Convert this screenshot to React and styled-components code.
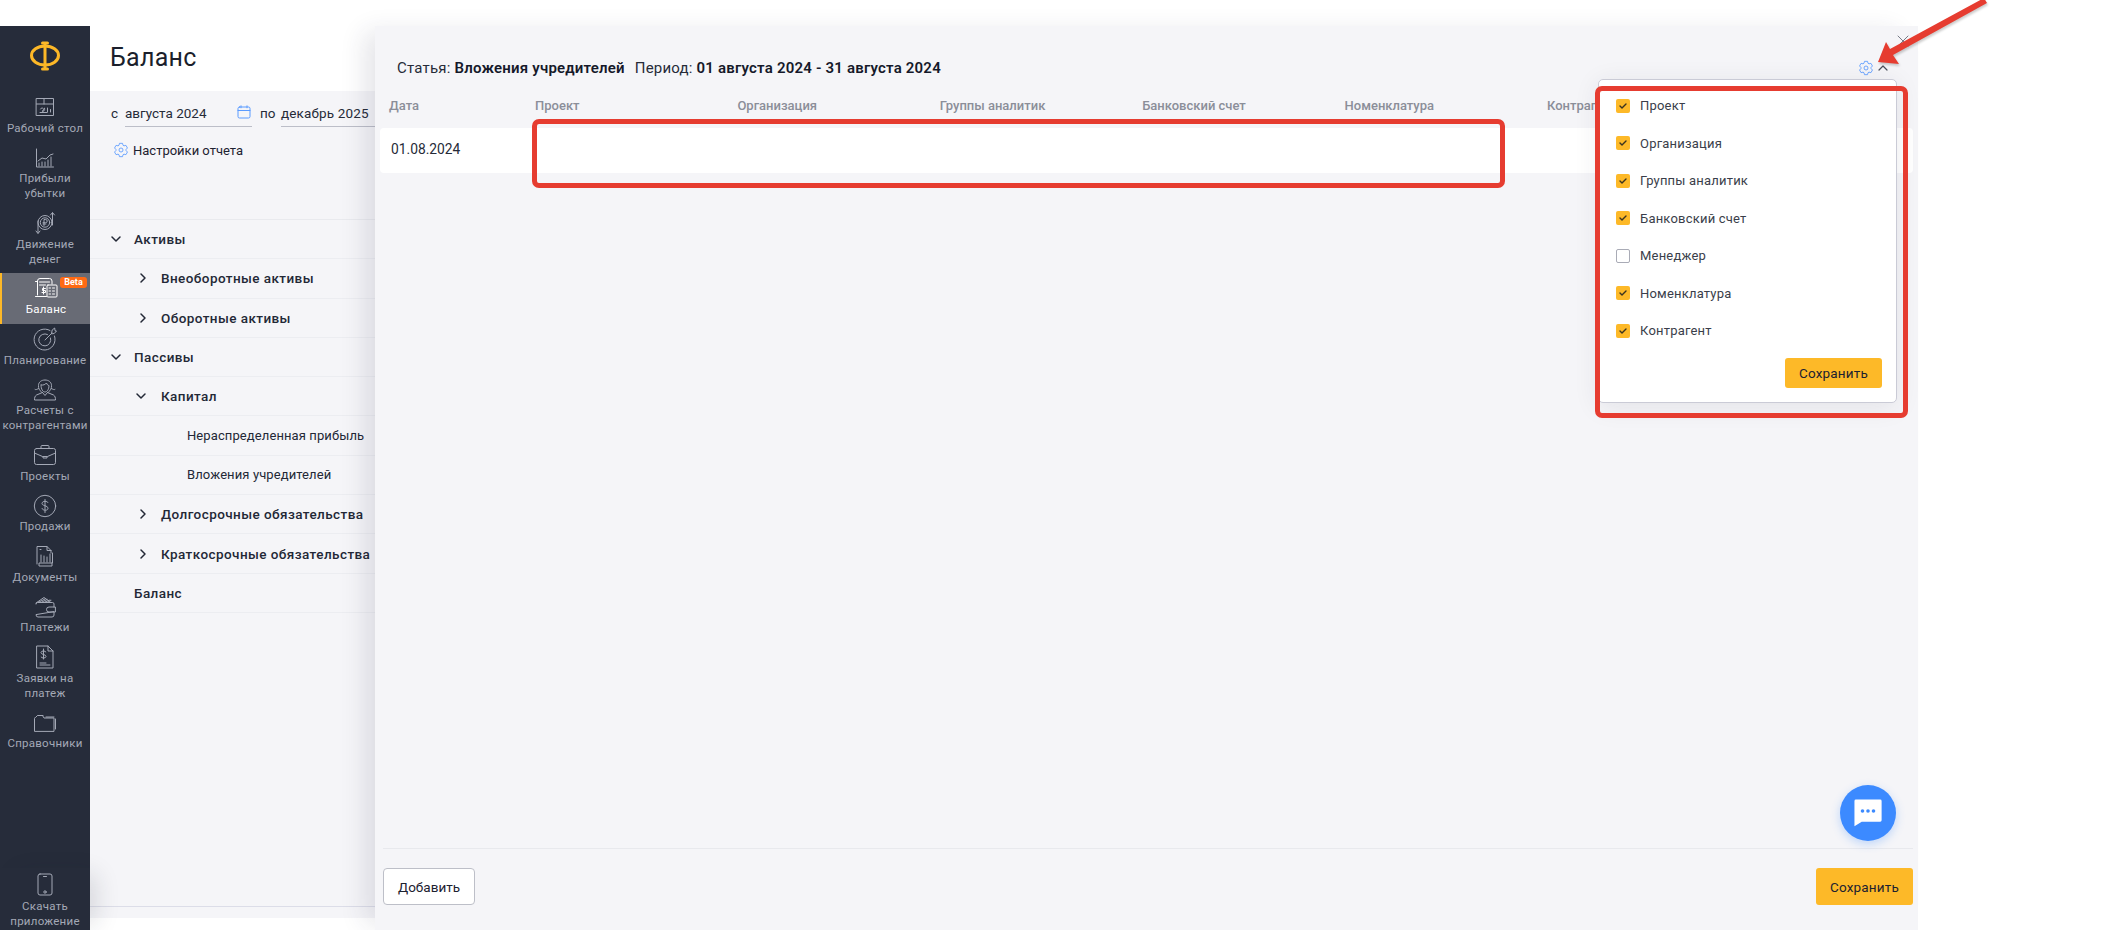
import React from "react";
import styled, { createGlobalStyle } from "styled-components";

const Global = createGlobalStyle`
  html, body { margin: 0; padding: 0; background: #fff; }
  * { box-sizing: border-box; }
  body { font-family: "Roboto", "Noto Sans", "Liberation Sans", sans-serif; color: #1c2130; }
`;

const Page = styled.div`
  position: relative; width: 2105px; height: 930px; padding-top: 26px;
  display: flex; overflow: hidden; background: #fff;
`;
const Sidebar = styled.nav`
  width: 90px; flex: none; background: #262c3a; display: flex; flex-direction: column; position: relative; z-index: 1;
`;
const LogoBox = styled.div`
  height: 66px; display: flex; align-items: center; justify-content: center; padding-bottom: 6px;
`;
const NavItem = styled.div`
  position: relative; height: ${p => (p.$double ? 65.45 : 50.6)}px; padding-top: 3.5px;
  display: flex; flex-direction: column; align-items: center;
  color: ${p => (p.$active ? "#fff" : "#a4a9b6")};
  background: ${p => (p.$active ? "#686b75" : "transparent")};
  border-left: ${p => (p.$active ? "2px solid #fdb827" : "0")};
`;
const NavIcon = styled.div`
  height: 23px; display: flex; align-items: center; justify-content: center;
`;
const NavLabel = styled.div`
  margin-top: 2px; font-size: 11.5px; line-height: 15px; text-align: center; letter-spacing: .25px; white-space: pre-line;
`;
const Beta = styled.span`
  position: absolute; top: 4px; right: 3px; width: 27px; height: 11px; border-radius: 3px;
  background: #ff6a13; color: #fff; font-size: 9px; font-weight: 700; line-height: 11px; text-align: center;
`;
const SideFooter = styled.div`
  margin-top: auto; height: 62px; padding-top: 5.5px; display: flex; flex-direction: column; align-items: center;
  color: #a4a9b6; position: relative; box-shadow: 12px 0 24px -6px rgba(30,35,50,.14);
`;
const Main = styled.main`
  width: 300px; flex: none; display: flex; flex-direction: column;
`;
const Head = styled.header`
  height: 65px; padding-left: 20px; display: flex; align-items: center; flex: none;
`;
const Title = styled.h1`
  margin: 0; font-size: 25px; font-weight: 400; color: #1b1f2c; letter-spacing: .3px; position: relative; top: -1px;
`;
const Content = styled.section`
  flex: 1; margin-bottom: 12px; background: #f5f5f8; display: flex; flex-direction: column;
`;
const Filters = styled.div`
  height: 128px; flex: none; padding: 10px 0 0 20px;
`;
const DateRow = styled.div`
  display: flex; align-items: flex-start; font-size: 13.5px; color: #262b38; height: 27px; line-height: 24px;
`;
const DateLabel = styled.span`
  width: ${p => p.$w}px; flex: none; padding-left: 1px;
`;
const DateInput = styled.div`
  width: ${p => p.$w}px; flex: none; height: 26px; border-bottom: 1px solid #bcbec8; position: relative; white-space: nowrap;
  margin-right: ${p => p.$mr ?? 0}px; letter-spacing: ${p => p.$ls ?? 0}px;
`;
const CalendarSlot = styled.span`
  position: absolute; right: 1px; top: 4px; color: #5b9bff; display: flex;
`;
const SettingsLink = styled.div`
  display: flex; align-items: center; gap: 4px; margin: 12px 0 0 3px; font-size: 13px; color: #1d2230; height: 20px;
`;
const Tree = styled.div`
  border-top: 1.5px solid #e9eaee; flex: none;
`;
const TreeRow = styled.div`
  height: 39.3px; border-bottom: 1.5px solid #ecedf1; display: flex; align-items: center;
  padding-left: ${p => p.$indent}px; white-space: nowrap;
  font-size: ${p => (p.$plain ? 13 : 13.5)}px; letter-spacing: ${p => (p.$plain ? ".1px" : ".42px")};
  font-weight: ${p => (p.$plain ? 400 : 500)}; color: #232836;
`;
const Chevron = styled.span`
  width: ${p => p.$w}px; flex: none; display: flex; color: #232836;
`;
const Spacer = styled.div` flex: 1; `;
const ContentEnd = styled.div`
  height: 12px; border-top: 1px solid #dcdde8; flex: none;
`;
const Drawer = styled.aside`
  position: absolute; left: 375px; top: 26px; width: 1543px; height: 904px; background: #f5f5f8;
  box-shadow: -16px 0 24px -6px rgba(40,45,70,.12); display: flex; flex-direction: column; padding: 0 5px 0 5px; z-index: 2;
`;
const DrawerHead = styled.div`
  height: 68px; padding: 33px 0 0 17px; font-size: 15px; color: #262b38; display: flex; gap: 10px; flex: none; letter-spacing: .2px; line-height: 18px;
  b { font-weight: 600; color: #15192a; }
`;
const ColHeads = styled.div`
  display: grid; grid-template-columns: 146px repeat(6, 202.4px); padding: 1px 0 0 9px; height: 34px; align-items: start; flex: none;
  font-size: 13px; font-weight: 500; color: #8b8e99; overflow: hidden; white-space: nowrap; line-height: 22px;
`;
const DataRow = styled.div`
  height: 45px; background: #fff; border-radius: 4px; display: flex; align-items: center; padding: 0 0 3px 11px; font-size: 13.8px; color: #262b38; flex: none;
`;
const DrawerFill = styled.div` flex: 1; `;
const DrawerFoot = styled.footer`
  height: 82px; flex: none; border-top: 1.5px solid #e8e9ed; margin: 0 0 0 3px; padding-top: 19px;
  display: flex; justify-content: space-between; align-items: flex-start;
`;
const GhostButton = styled.button`
  width: 92px; height: 37px; background: #fff; border: 1px solid #bdbfc8; border-radius: 4px;
  font: 400 13.5px "Roboto", sans-serif; color: #1c2130;
`;
const PrimaryButton = styled.button`
  width: ${p => p.$w}px; height: ${p => p.$h}px; background: #fdb928; border: 0; border-radius: 3px;
  font: 400 13.5px "Roboto", sans-serif; color: #1c2130; letter-spacing: .2px;
`;
const CloseBtn = styled.span`
  position: absolute; right: 9px; top: 9px; color: #777b87; display: flex;
`;
const HeadIcons = styled.div`
  position: absolute; right: 29px; top: 34px; display: flex; align-items: center; gap: 3px;
`;
const Dropdown = styled.div`
  position: absolute; left: 1223px; top: 53px; width: 299px; height: 324px; background: #fff;
  border: 1px solid #cacbd6; border-radius: 5px; box-shadow: 0 4px 26px rgba(40,45,70,.09); padding: 7px 0 0 17px;
`;
const CheckRow = styled.label`
  height: 37.5px; display: flex; align-items: center; gap: 10px; font-size: 13px; color: #3a3e4a; letter-spacing: .2px;
`;
const Box = styled.span`
  width: 14px; height: 14px; border-radius: 2px; display: flex; align-items: center; justify-content: center;
  background: ${p => (p.$on ? "#fdb928" : "#fff")}; border: ${p => (p.$on ? "0" : "1.5px solid #a9abb6")};
`;
const MenuFoot = styled.div`
  position: absolute; right: 14px; bottom: 14px;
`;
const ChatBubble = styled.div`
  position: absolute; left: 1465px; top: 759px; width: 56px; height: 56px; border-radius: 50%; background: #3c8aff;
  display: flex; align-items: center; justify-content: center; box-shadow: 0 3px 10px rgba(60,138,255,.3);
`;
const RedFrame = styled.div`
  position: absolute; left: ${p => p.$l}px; top: ${p => p.$t}px; width: ${p => p.$w}px; height: ${p => p.$h}px;
  border: 5px solid #e63c30; border-radius: 7px; z-index: 3; pointer-events: none;
`;
const ArrowSvg = styled.svg`
  position: absolute; left: 1860px; top: 0; z-index: 4; filter: drop-shadow(1px 2px 1px rgba(0,0,0,.2));
`;

const I = ({ children, w = 22, h = 22, vb, sw = 1 }) => (
  <svg width={w} height={h} viewBox={vb || `0 0 ${w} ${h}`} fill="none" stroke="currentColor" strokeWidth={sw} strokeLinecap="round" strokeLinejoin="round">{children}</svg>
);

const icons = {
  desk: <I w={20} h={20}><rect x="1.5" y="1.5" width="17" height="17" /><path d="M1.5 7h17M9 1.5V7M5.5 12a1.6 1.6 0 1 1 1.5 2.2c2 .6 3-1 2.6-3M5 15.5h7M12.5 11v4M15.5 12.5V15" /></I>,
  chart: <I w={20} h={20}><path d="M1.5 1v18h17M3 13l4-3 4 1 4-4 3-1" /><path d="M4 18v-3M7 18v-4M10 18v-4M13 18v-6M16 18V9" /></I>,
  money: <I w={24} h={24}><circle cx="12" cy="11.5" r="7" /><circle cx="12" cy="11.5" r="4.7" /><path d="M11 14.5v-6h1.6a1.6 1.6 0 0 1 0 3.2H10M10 13h3M5 10v12M3 20l2 2.5L7 20M19.5 14V2M17.5 4l2-2.5 2 2.5" /></I>,
  balance: <I w={24} h={22}><path d="M3.5 18V4a2.5 2.5 0 0 1 2.5-2.5h9.5A2.5 2.5 0 0 1 18 4v3M1.5 4.5h2M1.5 19.5h11M5.5 5h10M5.5 8h6" /><rect x="13" y="8" width="10" height="12" rx="1" /><path d="M15 11h1.5M18.5 11h2M15 14h1.5M18.5 14h2M15 17h1.5M18.5 17h2M9.5 10v7M11.5 11.5H8.5v2h3v2H8" /></I>,
  plan: <I w={24} h={24}><path d="M17 3.5A10.5 10.5 0 1 0 21.5 9" /><path d="M14.5 7.5a6 6 0 1 0 3 3.5" /><path d="M12 13l7-7M18.500 6.500l.7-3.500 2.500-2 .3 2.700 1.500.3-2 2.200z" /></I>,
  people: <I w={24} h={22}><path d="M8.500 13c-2.500-2-3-3.500-3-6.500C5.500 3 8.500 1 12 1s6.500 2 6.500 5.500c0 3-.5 4.500-3 6.500" /><path d="M8.500 6c1.500.5 4-.5 5-2 .5 1.500 1.500 2.500 2.500 2.500 0 4-2 6.500-4 6.500s-4-2.500-4-7z" /><path d="M9.500 13.500l-6 2.500C2 17 1.500 18.500 1.500 21h21c0-2.500-.5-4-2-5l-6-2.500M9.500 13.500L12 16.500l2.500-3M5.500 9.500c-1.500 1-3 1.500-3.500 1M18.500 9.500c1.500 1 3 1.500 3.500 1" /></I>,
  case: <I w={24} h={22}><rect x="1.500" y="4.500" width="21" height="16" rx="2" /><path d="M8 4.500V2.500a1 1 0 0 1 1-1h6a1 1 0 0 1 1 1v2M1.500 9l8 3.500h5l8-3.500M10 12.500v1.500h4v-1.500" /></I>,
  dollar: <I w={24} h={24}><circle cx="12" cy="12" r="10.700" /><path d="M15 8.500c-.5-1.500-5.500-2-6 .8-.4 2.700 6 2 6 5 0 2.700-5.500 2.500-6 .2M12 5.500v13" /></I>,
  docs: <I w={22} h={22}><path d="M3 19V1.500h10l4 4V8M13 1.500v4h4M6 4.500h1M7 10v7M10 11v6M13 12v5M16 9v8M18.500 8v10H5v3h13v-3" /></I>,
  wallet: <I w={22} h={22}><path d="M2 7l8-5.500 5 3.500M2 8a1.500 1.500 0 0 1 1.500-1.500h15A1.500 1.500 0 0 1 20 8v3M20 16v3a2 2 0 0 1-2 2H4a2 2 0 0 1-2-2zM21 11h-6a2.500 2.500 0 0 0 0 5h6zM5 6l6-3M8 6l5-2.500M11 6l5-2M14 6l3-1.500" /></I>,
  invoice: <I w={20} h={24}><path d="M2 1h11l5 5v17H2zM13 1v5h5M5 18h6M5 20h10" /><path d="M11 7c-.5-1.500-5-1.500-5 .5 0 2.500 5 1.500 5 4 0 2-4.500 2-5 .5M8.500 4v10" /></I>,
  folder: <I w={24} h={18}><path d="M1.500 17V4.500a1 1 0 0 1 1-1l2-2h5L11 4h10v13zM5 1.500h5M13 3h8M22.500 5v10" /></I>,
  phone: <I w={18} h={24}><rect x="2" y="1" width="14" height="21" rx="2" /><path d="M7.500 3.500h3" /><circle cx="9" cy="19" r="1.200" /></I>,
};

const Gear = ({ size = 16 }) => (
  <svg width={size} height={size} viewBox="0 0 24 24" fill="none" stroke="#5b9bff" strokeWidth="1.300" strokeLinejoin="round">
    <path d="M9.700 2h4.600l.7 2.900 1.500.9 2.900-.8 2.300 4-2.100 2.100v1.800l2.100 2.100-2.300 4-2.900-.8-1.500.9-.7 2.900H9.700L9 19.100l-1.500-.9-2.900.8-2.300-4 2.100-2.100v-1.800L2.300 9l2.300-4 2.900.8L9 4.900z" />
    <circle cx="12" cy="12" r="3" />
  </svg>
);
const Down = () => <I w={12} h={10} sw={1.500}><path d="M2 3l4 4 4-4" /></I>;
const Right = () => <I w={10} h={12} sw={1.500}><path d="M3 2l4 4-4 4" /></I>;
const Check = () => <I w={10} h={10} sw={1.400}><path d="M2 5l2 2 4-4" stroke="#3a3320" /></I>;

const nav = [
  { label: "Рабочий стол", icon: "desk" },
  { label: "Прибыли\nубытки", icon: "chart", double: true },
  { label: "Движение\nденег", icon: "money", double: true },
  { label: "Баланс", icon: "balance", active: true, beta: true },
  { label: "Планирование", icon: "plan" },
  { label: "Расчеты с\nконтрагентами", icon: "people", double: true },
  { label: "Проекты", icon: "case" },
  { label: "Продажи", icon: "dollar" },
  { label: "Документы", icon: "docs" },
  { label: "Платежи", icon: "wallet" },
  { label: "Заявки на\nплатеж", icon: "invoice", double: true },
  { label: "Справочники", icon: "folder" },
];

const tree = [
  { t: "Активы", i: 20, c: "down", w: 24 },
  { t: "Внеоборотные активы", i: 48, c: "right", w: 23 },
  { t: "Оборотные активы", i: 48, c: "right", w: 23 },
  { t: "Пассивы", i: 20, c: "down", w: 24 },
  { t: "Капитал", i: 45, c: "down", w: 26 },
  { t: "Нераспределенная прибыль", i: 97, plain: true },
  { t: "Вложения учредителей", i: 97, plain: true },
  { t: "Долгосрочные обязательства", i: 48, c: "right", w: 23 },
  { t: "Краткосрочные обязательства", i: 48, c: "right", w: 23 },
  { t: "Баланс", i: 44 },
];

const cols = ["Дата", "Проект", "Организация", "Группы аналитик", "Банковский счет", "Номенклатура", "Контрагент"];
const checks = [["Проект", 1], ["Организация", 1], ["Группы аналитик", 1], ["Банковский счет", 1], ["Менеджер", 0], ["Номенклатура", 1], ["Контрагент", 1]];

export default function App() {
  return (
    <Page>
      <Global />
      <Sidebar>
        <LogoBox>
          <svg width="32" height="32" viewBox="0 0 32 32" fill="none" stroke="#fdb827" strokeWidth="3" strokeLinecap="round">
            <ellipse cx="16" cy="15.500" rx="13.500" ry="9.500" />
            <path d="M16 3v26M13.500 3h5M13.500 29h5" />
          </svg>
        </LogoBox>
        {nav.map(n => (
          <NavItem key={n.label} $double={n.double} $active={n.active}>
            <NavIcon>{icons[n.icon]}</NavIcon>
            <NavLabel>{n.label}</NavLabel>
            {n.beta && <Beta>Beta</Beta>}
          </NavItem>
        ))}
        <SideFooter>
          <NavIcon>{icons.phone}</NavIcon>
          <NavLabel>{"Скачать\nприложение"}</NavLabel>
        </SideFooter>
      </Sidebar>

      <Main>
        <Head><Title>Баланс</Title></Head>
        <Content>
          <Filters>
            <DateRow>
              <DateLabel $w={15}>с</DateLabel>
              <DateInput $w={127} $mr={7}>августа 2024<CalendarSlot><I w={14} h={14}><rect x="1" y="2" width="12" height="11" rx="1.500" /><path d="M1 5.500h12M4 .8v2M10 .8v2" /></I></CalendarSlot></DateInput>
              <DateLabel $w={22}>по</DateLabel>
              <DateInput $w={120} $ls={0.15}>декабрь 2025</DateInput>
            </DateRow>
            <SettingsLink><Gear />Настройки отчета</SettingsLink>
          </Filters>
          <Tree>
            {tree.map(r => (
              <TreeRow key={r.t} $indent={r.i} $plain={r.plain}>
                {r.c && <Chevron $w={r.w}>{r.c === "down" ? <Down /> : <Right />}</Chevron>}
                {r.t}
              </TreeRow>
            ))}
          </Tree>
          <Spacer />
          <ContentEnd />
        </Content>
      </Main>

      <Drawer>
        <CloseBtn><I w={12} h={12}><path d="M1 1l10 10M11 1L1 11" /></I></CloseBtn>
        <DrawerHead>
          <span>Статья: <b>Вложения учредителей</b></span>
          <span>Период: <b>01 августа 2024 - 31 августа 2024</b></span>
        </DrawerHead>
        <HeadIcons>
          <Gear size={16} />
          <I w={12} h={10} sw={1.200}><path d="M2 7l4-4 4 4" stroke="#4a4e5a" /></I>
        </HeadIcons>
        <ColHeads>{cols.map(c => <span key={c}>{c}</span>)}</ColHeads>
        <DataRow>01.08.2024</DataRow>
        <DrawerFill />
        <DrawerFoot>
          <GhostButton>Добавить</GhostButton>
          <PrimaryButton $w={97} $h={37}>Сохранить</PrimaryButton>
        </DrawerFoot>
        <Dropdown>
          {checks.map(([t, on]) => (
            <CheckRow key={t}>
              <Box $on={!!on}>{on ? <Check /> : null}</Box>
              {t}
            </CheckRow>
          ))}
          <MenuFoot><PrimaryButton $w={97} $h={30}>Сохранить</PrimaryButton></MenuFoot>
        </Dropdown>
        <ChatBubble>
          <svg width="30" height="30" viewBox="0 0 30 30">
            <path d="M3 1.500h25a1.500 1.500 0 0 1 1.500 1.500v20a1.500 1.500 0 0 1-1.500 1.500H9L1.500 29V3A1.500 1.500 0 0 1 3 1.500z" fill="#fff" transform="scale(.97)" />
            <circle cx="9.500" cy="13" r="1.800" fill="#3c8aff" /><circle cx="15" cy="13" r="1.800" fill="#3c8aff" /><circle cx="20.500" cy="13" r="1.800" fill="#3c8aff" />
          </svg>
        </ChatBubble>
      </Drawer>

      <RedFrame $l={532} $t={119} $w={973} $h={69} />
      <RedFrame $l={1595} $t={86} $w={313} $h={332} />
      <ArrowSvg width="140" height="70" viewBox="0 0 140 70">
        <path d="M124 -2 L127 3 L33 55 L39 64 L18 62 L26 42 L30 49 Z" fill="#e63c30" />
      </ArrowSvg>
    </Page>
  );
}
